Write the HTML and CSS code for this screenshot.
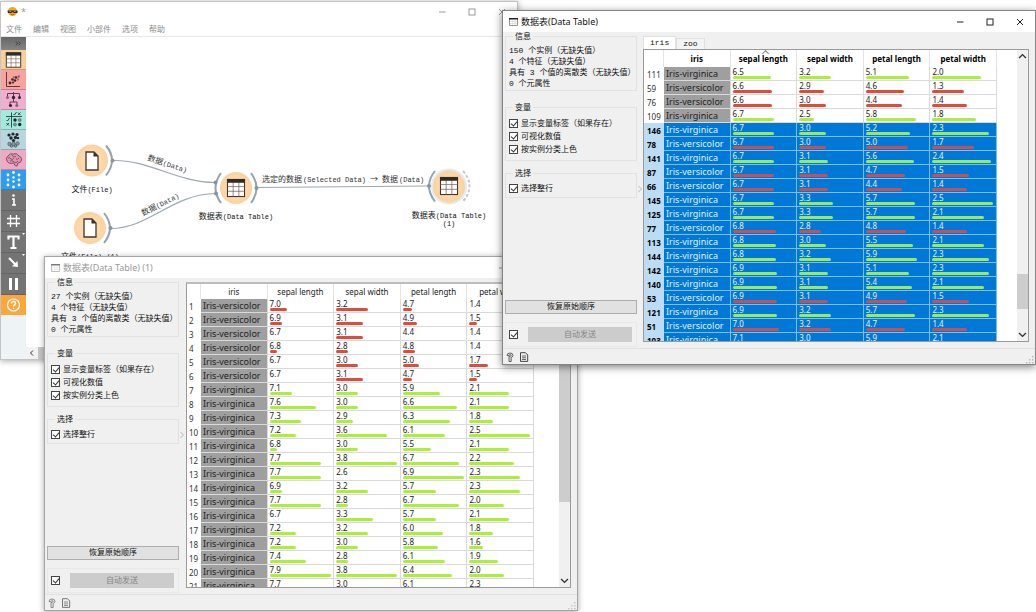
FILE: index.html
```html
<!DOCTYPE html>
<html lang="zh-CN">
<head>
<meta charset="utf-8">
<title>Data Table</title>
<link rel="stylesheet" href="styles.css">
</head>
<body>
<svg class="defs" width="0" height="0" aria-hidden="true">
  <symbol id="min" viewBox="0 0 8 8"><path d="M1 4h6.500" /></symbol>
  <symbol id="max" viewBox="0 0 8 8"><rect x="1" y="1" width="6" height="6"/></symbol>
  <symbol id="close" viewBox="0 0 8 8"><path d="M1 1l6 6M7 1l-6 6"/></symbol>
  <symbol id="sheet" viewBox="0 0 20 20">
    <rect x="1" y="1" width="18" height="18" fill="#fff" stroke="#40362f" stroke-width="1.200"/>
    <path d="M1 8.500h18M1 13.500h18M7 4v15M13 4v15" stroke="#77665c" stroke-width=".8"/>
    <rect x=".5" y=".5" width="19" height="4" fill="#332b26"/>
  </symbol>
  <symbol id="page" viewBox="0 0 14 20">
    <path d="M1 1h8l4 4v14H1z" fill="#fff" stroke="#40362f" stroke-width="1.300"/>
    <path d="M8.500 1v4.500H13z" fill="#332b26"/>
  </symbol>
  <symbol id="smallsheet" viewBox="0 0 9 9"><path d="M.5 1.500h8v7h-8z" fill="#fff" stroke="#777" stroke-width=".8"/><path d="M0 1h9v1.500H0z" fill="#222"/><path d="M1 4.500h7M1 6.500h7M3.500 3v5M6 3v5" stroke="#ccc" stroke-width=".5"/></symbol>
  <symbol id="help" viewBox="0 0 10 10"><path d="M2 3.500Q2 1 5 1t3 2.500Q8 5 6.200 5.500V9.500H4V4.500Q6 4.500 6 3.500T5 2.700 4 3.800z" fill="#ddd" stroke="#555" stroke-width=".9"/></symbol>
  <symbol id="report" viewBox="0 0 10 10"><path d="M1.500.7H6.500L8.700 3V9.400H1.500z" fill="#eee" stroke="#444"/><path d="M3 4h4M3 5.800h4M3 7.500h4" stroke="#444" stroke-width=".8"/></symbol>
  <symbol id="up" viewBox="0 0 8 6"><path d="M1.500 4.500L4 2l2.500 2.500"/></symbol>
  <symbol id="down" viewBox="0 0 8 6"><path d="M1.500 1.500L4 4l2.500-2.500"/></symbol>
</svg>

<section class="window main">
  <header class="titlebar">
    <svg class="logo" viewBox="0 0 12 12"><circle cx="6" cy="6" r="5" fill="#f7a51c"/><path d="M.5 5h11v2.500H7.500L6 6.500 4.500 7.500H1z" fill="#3c2c18"/><path d="M2.500 5.800h2M7.500 5.800h2" stroke="#d9c8a0" stroke-width=".8"/><path d="M4 9q2 1 4 0" stroke="#b3541e" fill="none"/></svg>
    <span class="title">*</span>
    <button class="winbtn" aria-label="最小化"><svg><use href="#min"/></svg></button>
    <button class="winbtn" aria-label="最大化"><svg><use href="#max"/></svg></button>
    <button class="winbtn" aria-label="关闭"><svg><use href="#close"/></svg></button>
  </header>
  <nav class="menu">
    <button>文件</button><button>编辑</button><button>视图</button><button>小部件</button><button>选项</button><button>帮助</button>
  </nav>
  <div class="workspace">
    <div class="toolbar">
      <button class="expand" aria-label="展开"><svg viewBox="0 0 25 14"><path d="M15 5l2 2-2 2M18 5l2 2-2 2" fill="none" stroke="#222" stroke-width=".7"/></svg></button>
      <button class="cat data" aria-label="数据"><svg viewBox="0 0 25 20"><use href="#sheet" x="4" y="2" width="17" height="16"/></svg></button>
      <button class="cat visual" aria-label="可视化"><svg viewBox="0 0 25 20"><path d="M5.500 2v14.500H19" fill="none" stroke="#5d3a3a"/><g fill="#3d2628"><circle cx="9" cy="13" r="1.400"/><circle cx="12" cy="12.500" r="1.100"/><circle cx="11.500" cy="9.500" r="1.300"/><circle cx="14" cy="10.500" r="1.300"/><circle cx="15" cy="7.500" r="1.300"/></g><g fill="#8d6464"><circle cx="17.800" cy="6.500" r="1.200"/><circle cx="12.800" cy="7.300" r="1"/><circle cx="17" cy="9.500" r="1"/></g></svg></button>
      <button class="cat model" aria-label="模型"><svg viewBox="0 0 25 20"><path d="M6.500 7V3.500h12V7M12.500 2v10M9 15v-3h7v3" fill="none" stroke="#5b3e4e"/><g fill="#382431"><circle cx="12.500" cy="7.500" r="1.700"/><circle cx="18.500" cy="7.500" r="1.500"/><circle cx="9.500" cy="15.500" r="1.600"/></g><g fill="#8b6178"><circle cx="6.500" cy="7.500" r="1.500"/><circle cx="15.800" cy="15.500" r="1.500"/></g></svg></button>
      <button class="cat evaluate" aria-label="评估"><svg viewBox="0 0 25 20"><path d="M5 6.500h16M10.500 2.500v15M12.500 4l1 1 2-3M17 2.500l2.500 2.500m0-2.500L17 5M5.500 10l1 1 2-3M5.500 13l2.500 2.500m0-2.500l-2.500 2.500" fill="none" stroke="#223e3b" stroke-width=".9"/><g fill="#152926"><circle cx="14" cy="10" r="1.700"/><circle cx="18.700" cy="14.500" r="1.700"/></g><g fill="#6f9994" stroke="#45625f" stroke-width=".6"><circle cx="18.700" cy="10" r="1.500"/><circle cx="14" cy="14.500" r="1.500"/></g></svg></button>
      <button class="cat cluster" aria-label="无监督"><svg viewBox="0 0 25 20"><g fill="#20282b"><circle cx="8" cy="5" r="1.600"/><circle cx="12" cy="4" r="1.600"/><circle cx="16" cy="4.500" r="1.600"/><circle cx="10" cy="8" r="1.700"/><circle cx="14.500" cy="7.500" r="1.700"/><circle cx="17" cy="8" r="1.200"/><circle cx="12.500" cy="10.500" r="1.600"/></g><g fill="#879da4" stroke="#46565c" stroke-width=".7"><circle cx="8.500" cy="14" r="1.700"/><circle cx="12.500" cy="14" r="1.800"/><circle cx="16.500" cy="13.500" r="1.700"/><circle cx="10.500" cy="16" r="1.300"/><circle cx="14.500" cy="16" r="1.300"/></g></svg></button>
      <button class="cat brain" aria-label="教育"><svg viewBox="0 0 25 20"><path d="M6 11Q4 8 7 6q2-3 5-2 4-1.500 6 2 3 1 2.500 4-.5 3-3.500 3l-1 3h-1.500L12.500 13Q8 14.500 6 11z" fill="#d996ae" stroke="#774458" stroke-width=".9"/><path d="M7 8q2-1 3 1t3-1M11 5q1 3 4 1.500M15 9q2 1 3-1M9 11q2-1 4 1t4-1" fill="none" stroke="#774458" stroke-width=".8"/></svg></button>
      <button class="cat active" aria-label="更多"><svg viewBox="0 0 25 20"><g fill="#fff"><circle cx="12.500" cy="2.500" r="1.400"/><circle cx="7" cy="5" r="1.400"/><circle cx="12.500" cy="7.500" r="1.200"/><circle cx="18" cy="5" r="1.400"/><circle cx="7" cy="10" r="1.400"/><circle cx="18" cy="10" r="1.400"/><circle cx="12.500" cy="11.500" r="1.200"/><circle cx="7" cy="15" r="1.400"/><circle cx="18" cy="15" r="1.400"/><circle cx="12.500" cy="17" r="1.400"/></g></svg></button>
      <button class="tool" aria-label="信息"><svg viewBox="0 0 25 20"><circle cx="12.500" cy="5.500" r="1.300" fill="#fff"/><path d="M11 9h2v6M11 15h4" fill="none" stroke="#fff" stroke-width="1.600"/></svg></button>
      <button class="tool" aria-label="网格"><svg viewBox="0 0 25 20"><path d="M9.500 4v12M15.500 4v12M6 7.500h13M6 12.500h13" stroke="#fff" stroke-width="1.300"/></svg></button>
      <button class="tool" aria-label="文字"><svg viewBox="0 0 25 20"><path d="M7.500 7.500V4.500h10v3M12.500 4v12M9.500 16h6" fill="none" stroke="#fff" stroke-width="2.200"/><path d="M21 1h3l-1.500 2z" fill="#fff"/></svg></button>
      <button class="tool" aria-label="箭头"><svg viewBox="0 0 25 20"><path d="M8 5l7 7" stroke="#fff" stroke-width="2"/><path d="M17 14l-6-.8L16.500 8z" fill="#fff"/><path d="M21 1h3l-1.500 2z" fill="#fff"/></svg></button>
      <button class="tool" aria-label="暂停"><svg viewBox="0 0 25 20"><path d="M9.500 4v12M15.500 4v12" stroke="#fff" stroke-width="3"/></svg></button>
      <button class="tool question" aria-label="帮助"><svg viewBox="0 0 25 20"><circle cx="12.500" cy="10" r="6" fill="none" stroke="#fff" stroke-width="1.200"/><path d="M10.500 8.500Q10.500 6.500 12.500 6.500t2 1.800-2 2.200v1.200M12.500 12.800v1.200" fill="none" stroke="#fff" stroke-width="1.300"/></svg></button>
    </div>
    <div class="canvas">
      <svg class="flow" viewBox="26 37 490 310" width="490" height="310">
        <defs><radialGradient id="peach"><stop offset="0" stop-color="#fee3bd"/><stop offset="1" stop-color="#fcd29f"/></radialGradient></defs>
        <g class="wire">
          <path d="M113 160.500C150 160 176 182 215 182.500"/>
          <path d="M111 228.500C150 228 172 194 216 193.500"/>
          <path d="M257 187.500L428 186"/>
        </g>
        <g class="arc">
          <path d="M106 145.500Q118 160 106 175.500"/>
          <path d="M104 213Q116 228 104 243"/>
          <path d="M221 173Q210 188 221 203"/><path d="M251 173Q262 188 251 203"/>
          <path d="M435 171Q423 186 435 201.500"/>
          <path class="dash" d="M463 171Q476 186 463 201.500"/>
        </g>
        <g fill="#8397a3"><circle cx="112.500" cy="160.500" r="2"/><circle cx="110.500" cy="228" r="2"/><circle cx="215.500" cy="182.500" r="2"/><circle cx="216" cy="193.500" r="2"/><circle cx="256.500" cy="188" r="2"/><circle cx="429" cy="186" r="2"/></g>
        <circle cx="449" cy="186.500" r="18" fill="#e4eaee"/>
        <g fill="url(#peach)"><circle cx="92" cy="160.500" r="16"/><circle cx="90" cy="228" r="16"/><circle cx="236" cy="188" r="16"/><circle cx="449" cy="186.500" r="16"/></g>
        <use href="#page" x="85" y="151" width="14" height="20"/>
        <use href="#page" x="83" y="218" width="14" height="20"/>
        <use href="#sheet" x="226.500" y="178.500" width="19" height="19"/>
        <use href="#sheet" x="439.500" y="176.500" width="19" height="19"/>
        <g class="name">
          <text x="92" y="192">文件<tspan class="mono">(File)</tspan></text>
          <text x="90" y="259">文件<tspan class="mono">(File) (1)</tspan></text>
          <text x="236" y="219">数据表<tspan class="mono">(Data Table)</tspan></text>
          <text x="449" y="218">数据表<tspan class="mono">(Data Table)</tspan></text>
          <text x="449" y="226"><tspan class="mono">(1)</tspan></text>
        </g>
        <g class="linkname">
          <text x="147" y="160" transform="rotate(18 147 160)">数据<tspan class="mono">(Data)</tspan></text>
          <text x="143" y="216" transform="rotate(-27 143 216)">数据<tspan class="mono">(Data)</tspan></text>
          <text x="262" y="182">选定的数据<tspan class="mono" x="303">(Selected</tspan><tspan class="mono" x="345">Data)</tspan><tspan x="370">→</tspan><tspan x="382">数据</tspan><tspan class="mono" x="399">(Data)</tspan></text>
        </g>
      </svg>
      <div class="hscroll"><svg viewBox="0 0 12 12"><path d="M7 3.500L4.500 6 7 8.500" fill="none" stroke="#333"/></svg><div class="hthumb"></div></div>
    </div>
  </div>
</section>

<section class="window back">
  <header class="titlebar">
    <svg class="appicon"><use href="#smallsheet"/></svg>
    <span class="title">数据表(Data Table) (1)</span>
    <button class="winbtn" aria-label="最小化"><svg><use href="#min"/></svg></button>
    <button class="winbtn" aria-label="最大化"><svg><use href="#max"/></svg></button>
    <button class="winbtn" aria-label="关闭"><svg><use href="#close"/></svg></button>
  </header>
  <div class="content">
    <div class="side">
      <fieldset class="info"><legend>信息</legend>
        <p>27 个实例（无缺失值）</p><p>4 个特征（无缺失值）</p><p>具有 3 个值的离散类（无缺失值）</p><p>0 个元属性</p>
      </fieldset>
      <fieldset class="vars"><legend>变量</legend>
        <label><input type="checkbox" checked>显示变量标签（如果存在）</label>
        <label><input type="checkbox" checked>可视化数值</label>
        <label><input type="checkbox" checked>按实例分类上色</label>
      </fieldset>
      <fieldset class="select"><legend>选择</legend>
        <label><input type="checkbox" checked>选择整行</label>
      </fieldset>
      <button class="restore">恢复原始顺序</button>
      <div class="auto"><input type="checkbox" checked aria-label="自动发送"><button disabled>自动发送</button></div>
    </div>
    <div class="splitter"><svg viewBox="0 0 6 10"><path d="M1.500 2L4.500 5 1.500 8"/></svg></div>
    <div class="view">
      <div class="frame">
        <div class="sheet"><table id="selected-table"></table></div>
        <div class="vscroll"><svg><use href="#up"/></svg><div class="track"><div class="thumb"></div></div><svg><use href="#down"/></svg></div>
      </div>
    </div>
  </div>
  <footer class="status"><svg><use href="#help"/></svg><svg><use href="#report"/></svg><svg class="grip" viewBox="0 0 9 9"><path d="M7 1h1.500v1.500H7zM7 4h1.500v1.500H7zM7 7h1.500v1.500H7zM4 4h1.500v1.500H4zM4 7h1.500v1.500H4zM1 7h1.500v1.500H1z" fill="#b8b8b8"/></svg></footer>
</section>

<section class="window front">
  <header class="titlebar">
    <svg class="appicon"><use href="#smallsheet"/></svg>
    <span class="title">数据表(Data Table)</span>
    <button class="winbtn" aria-label="最小化"><svg><use href="#min"/></svg></button>
    <button class="winbtn" aria-label="最大化"><svg><use href="#max"/></svg></button>
    <button class="winbtn" aria-label="关闭"><svg><use href="#close"/></svg></button>
  </header>
  <div class="content">
    <div class="side">
      <fieldset class="info"><legend>信息</legend>
        <p>150 个实例（无缺失值）</p><p>4 个特征（无缺失值）</p><p>具有 3 个值的离散类（无缺失值）</p><p>0 个元属性</p>
      </fieldset>
      <fieldset class="vars"><legend>变量</legend>
        <label><input type="checkbox" checked>显示变量标签（如果存在）</label>
        <label><input type="checkbox" checked>可视化数值</label>
        <label><input type="checkbox" checked>按实例分类上色</label>
      </fieldset>
      <fieldset class="select"><legend>选择</legend>
        <label><input type="checkbox" checked>选择整行</label>
      </fieldset>
      <button class="restore">恢复原始顺序</button>
      <div class="auto"><input type="checkbox" checked aria-label="自动发送"><button disabled>自动发送</button></div>
    </div>
    <div class="splitter"><svg viewBox="0 0 6 10"><path d="M1.500 2L4.500 5 1.500 8"/></svg></div>
    <div class="view">
      <div class="tabs"><button class="tab current">iris</button><button class="tab">zoo</button></div>
      <div class="frame">
        <div class="sheet"><table id="full-table"></table></div>
        <div class="vscroll"><svg><use href="#up"/></svg><div class="track"><div class="thumb"></div></div><svg><use href="#down"/></svg></div>
      </div>
    </div>
  </div>
  <footer class="status"><svg><use href="#help"/></svg><svg><use href="#report"/></svg><svg class="grip" viewBox="0 0 9 9"><path d="M7 1h1.500v1.500H7zM7 4h1.500v1.500H7zM7 7h1.500v1.500H7zM4 4h1.500v1.500H4zM4 7h1.500v1.500H4zM1 7h1.500v1.500H1z" fill="#b8b8b8"/></svg></footer>
</section>
<script src="tables.js"></script>
</body>
</html>
```
FILE: styles.css
```css
* { box-sizing: border-box; }
body {
  margin: 0;
  min-height: 100vh;
  position: relative;
  overflow: hidden;
  background: #fff;
  color: #111;
  font: 8px/11px "Liberation Mono", "Noto Sans CJK SC", monospace;
}
button { font: inherit; color: inherit; border: 0; padding: 0; background: none; }
svg { display: block; }
.defs { position: absolute; }

.window {
  position: absolute;
  display: flex;
  flex-direction: column;
  width: 534px;
  height: 355px;
  background: #f0f0f0;
  border: 1px solid #a5a5a5;
  box-shadow: 0 1px 6px rgba(0, 0, 0, .35);
}
.main { left: 0; top: 1px; width: 518px; height: 359px; background: #fff; border-color: #c4c4c4; }
.back { left: 44px; top: 256px; }
.front { left: 502px; right: 0; top: 10px; width: auto; border-color: #858585; box-shadow: 0 2px 8px rgba(0, 0, 0, .5); }

.titlebar {
  display: flex;
  align-items: center;
  flex: none;
  height: 21px;
  padding-left: 6px;
  background: #fff;
  font: 9px/12px "Noto Sans", "Noto Sans CJK SC", sans-serif;
}
.title { flex: 1; padding-left: 3px; }
.main .titlebar, .back .titlebar { color: #999; }
.main .titlebar { height: 19px; }
.logo { width: 11px; height: 11px; }
.appicon { width: 9px; height: 9px; }
.back .appicon { opacity: .6; }
.winbtn { width: 30px; height: 19px; display: flex; align-items: center; justify-content: center; color: #222; }
.main .winbtn, .back .winbtn { color: #999; }
.winbtn svg { width: 8px; height: 8px; fill: none; stroke: currentColor; stroke-width: 1; }

.menu {
  display: flex;
  gap: 11px;
  flex: none;
  height: 16px;
  padding-left: 5px;
  border-bottom: 1px solid #e8e8e8;
  color: #8c8c8c;
  font-family: "Noto Sans CJK SC", sans-serif;
}
.workspace { display: flex; flex: 1; min-height: 0; }
.toolbar { width: 25px; flex: none; background: #eef3f6; }
.toolbar button { display: block; width: 100%; height: 20px; border-bottom: 1px solid rgba(70, 60, 60, .3); }
.toolbar svg { width: 25px; height: 20px; }
.toolbar .expand { height: 13px; background: linear-gradient(#666, #858585); border: 0; }
.toolbar .expand svg { height: 13px; }
.toolbar .data { background: #f8cf99; }
.toolbar .visual { background: #f7a3a0; }
.toolbar .model { background: #f0afd0; }
.toolbar .evaluate { background: #a5e8dc; }
.toolbar .cluster { background: #b8d6df; }
.toolbar .brain { background: #efa9c4; }
.toolbar .active { background: #2e9df0; }
.toolbar .tool { background: #747474; height: 21px; }
.toolbar .question { background: #fca73c; border: 0; height: 20px; }
.canvas { flex: 1; min-width: 0; display: flex; flex-direction: column; }
.flow { flex: none; }
.wire { fill: none; stroke: #9ba8b0; stroke-width: 1.2; }
.arc { fill: none; stroke: #8fa3b1; stroke-width: 2; }
.dash { stroke: #c3cbd0; stroke-dasharray: 3 2; }
.name, .linkname { font: 8px "Noto Sans CJK SC", sans-serif; fill: #111; }
.name { text-anchor: middle; }
.linkname { fill: #333; }
.mono { font-family: "Liberation Mono", monospace; font-size: 7px; }
.hscroll { display: flex; flex: 1; background: #f2f2f2; }
.hscroll svg { width: 12px; height: 12px; }
.hthumb { flex: 1; background: #c6c6c6; }

.content { display: flex; flex: 1; min-height: 0; padding: 0 6px 0 2px; }
.side { display: flex; flex-direction: column; width: 132px; flex: none; padding-bottom: 1px; }
fieldset { margin: 0; padding: 5px 3px 1px; border: 1px solid #e2e2e2; min-width: 0; }
legend { padding: 0 2px; margin-left: 4px; line-height: 8px; font-family: "Noto Sans CJK SC", sans-serif; }
p { margin: 0; white-space: nowrap; }
.vars { margin-top: 12px; padding-top: 6px; padding-bottom: 4px; }
.select { margin-top: 8px; padding-bottom: 2px; }
label { display: flex; align-items: center; gap: 3px; height: 13px; white-space: nowrap; }
input[type="checkbox"] {
  appearance: none;
  flex: none;
  width: 9px;
  height: 9px;
  margin: 0;
  border: 1px solid #444;
  background: #fff;
  position: relative;
}
input[type="checkbox"]:checked::after {
  content: "";
  position: absolute;
  left: 2px;
  top: 0;
  width: 3px;
  height: 5px;
  border: solid #333;
  border-width: 0 1px 1px 0;
  transform: rotate(40deg);
}
.restore { margin-top: auto; height: 14px; line-height: 12px; background: #e1e1e1; border: 1px solid #adadad; }
.auto { display: flex; align-items: center; gap: 10px; height: 25px; margin-top: 8px; padding: 0 4px 0 3px; border: 1px solid #e8e8e8; }
.auto button { flex: 1; height: 15px; background: #ccc; color: #858585; }
.splitter { width: 6px; flex: none; padding-top: 152px; }
.back .splitter { width: 7px; }
.splitter svg { width: 6px; height: 10px; fill: none; stroke: #aaa; stroke-width: .8; }

.view { flex: 1; min-width: 0; display: flex; flex-direction: column; padding: 4px 0 6px; }
.tabs { display: flex; align-items: flex-end; height: 13px; flex: none; }
.tab { height: 11px; padding: 0 6px; background: #f4f4f4; border: 1px solid #e0e0e0; border-bottom: 0; line-height: 10px; }
.tab.current { height: 13px; padding: 0 6px; background: #fff; line-height: 12px; }
.frame { display: flex; flex: 1; min-height: 0; background: #fff; border: 1px solid #9a9a9a; }
.back .frame { border-top: 2px solid #bcbcbc; }
.sheet { flex: 1; min-width: 0; overflow: hidden; }

table { table-layout: fixed; border-spacing: 0; width: 353px; font: 8px/9px "Noto Sans", sans-serif; }
.back table { width: 347px; }
.index { width: 20px; }
.back .index { width: 14px; }
th, td { padding: 0; overflow: hidden; white-space: nowrap; }
thead th { height: 17px; font-weight: 700; color: #000; border-right: 1px solid #e4e4e4; position: relative; }
.back thead th { height: 15px; font-weight: 400; color: #222; }
.sorted::before {
  content: "";
  position: absolute;
  left: 50%;
  top: 1px;
  width: 4px;
  height: 4px;
  border: solid #888;
  border-width: 1px 0 0 1px;
  transform: rotate(45deg);
}
tbody th { height: 14px; padding-left: 3px; text-align: left; font-weight: 400; color: #333; }
.back tbody th { padding-left: 2px; }
td { height: 14px; padding-left: 2px; vertical-align: top; color: #222; border: solid #dadada; border-width: 0 1px 1px 0; }
.class { vertical-align: middle; background: #9f9f9f; font-size: 9px; }
.picked th { background: #bcdcf4; color: #000; font-weight: 700; }
.picked td { background: #0078d7; color: #e4f1fc; border-color: #7fbdec; }
.gauge { display: block; margin-right: 2px; }
.bar { display: block; height: 3px; border-radius: 2px; }
.green { background: #adee38; }
.red { background: #df4c3a; }
.picked .green { background: #98ec58; }
.picked .red { background: #c9504f; }

.vscroll { display: flex; flex-direction: column; width: 11px; flex: none; background: #f0f0f0; }
.vscroll svg { width: 11px; height: 12px; flex: none; fill: none; stroke: #333; }
.track { flex: 1; display: flex; flex-direction: column; }
.thumb { background: #cdcdcd; height: 35px; margin-top: 212px; }
.back .thumb { height: 206px; margin-top: 0; }

.status { display: flex; align-items: center; gap: 4px; flex: none; height: 16px; padding: 0 1px 0 2px; border-top: 1px solid #e0e0e0; }
.status svg { width: 10px; height: 10px; }
.status .grip { margin-left: auto; align-self: flex-end; width: 9px; height: 9px; }
.back .status svg { opacity: .7; }
```
FILE: tables.js
```js
const columns = ["sepal length", "sepal width", "petal length", "petal width"];

// Each row: label, class ("c" versicolor, "g" virginica), four measurements.
const selectedRows = `1 c 7.0 3.2 4.7 1.4
2 c 6.9 3.1 4.9 1.5
3 c 6.7 3.1 4.4 1.4
4 c 6.8 2.8 4.8 1.4
5 c 6.7 3.0 5.0 1.7
6 c 6.7 3.1 4.7 1.5
7 g 7.1 3.0 5.9 2.1
8 g 7.6 3.0 6.6 2.1
9 g 7.3 2.9 6.3 1.8
10 g 7.2 3.6 6.1 2.5
11 g 6.8 3.0 5.5 2.1
12 g 7.7 3.8 6.7 2.2
13 g 7.7 2.6 6.9 2.3
14 g 6.9 3.2 5.7 2.3
15 g 7.7 2.8 6.7 2.0
16 g 6.7 3.3 5.7 2.1
17 g 7.2 3.2 6.0 1.8
18 g 7.2 3.0 5.8 1.6
19 g 7.4 2.8 6.1 1.9
20 g 7.9 3.8 6.4 2.0
21 g 7.7 3.0 6.1 2.3`;

const fullRows = `111 g 6.5 3.2 5.1 2.0
59 c 6.6 2.9 4.6 1.3
76 c 6.6 3.0 4.4 1.4
109 g 6.7 2.5 5.8 1.8
146 g 6.7 3.0 5.2 2.3
78 c 6.7 3.0 5.0 1.7
141 g 6.7 3.1 5.6 2.4
87 c 6.7 3.1 4.7 1.5
66 c 6.7 3.1 4.4 1.4
145 g 6.7 3.3 5.7 2.5
125 g 6.7 3.3 5.7 2.1
77 c 6.8 2.8 4.8 1.4
113 g 6.8 3.0 5.5 2.1
144 g 6.8 3.2 5.9 2.3
142 g 6.9 3.1 5.1 2.3
140 g 6.9 3.1 5.4 2.1
53 c 6.9 3.1 4.9 1.5
121 g 6.9 3.2 5.7 2.3
51 c 7.0 3.2 4.7 1.4
103 g 7.1 3.0 5.9 2.1`;

function fill(id, text, ranges, pickedFrom, sortedColumn) {
  const head = columns
    .map((name, i) => `<th scope="col"${i === sortedColumn ? ' class="sorted"' : ""}>${name}</th>`)
    .join("");
  const body = text.split("\n").map((line, n) => {
    const [label, kind, ...values] = line.split(" ");
    const name = kind === "c" ? "Iris-versicolor" : "Iris-virginica";
    const color = kind === "c" ? "red" : "green";
    const cells = values.map((value, i) => {
      const [low, high] = ranges[i];
      const share = (value - low) / (high - low);
      const width = share > 0 ? 4 + share * 95 : 0;
      return `<td>${value}<span class="gauge"><span class="bar ${color}" style="width:${width.toFixed(1)}%"></span></span></td>`;
    }).join("");
    return `<tr${n >= pickedFrom ? ' class="picked"' : ""}><th scope="row">${label}</th><td class="class">${name}</td>${cells}</tr>`;
  }).join("");
  document.getElementById(id).innerHTML =
    `<thead><tr><th class="index"></th><th scope="col">iris</th>${head}</tr></thead><tbody>${body}</tbody>`;
}

fill("selected-table", selectedRows, [[6.7, 7.9], [2.6, 3.8], [4.4, 6.9], [1.4, 2.5]], Infinity, -1);
fill("full-table", fullRows, [[4.3, 7.9], [2.0, 4.4], [1.0, 6.9], [0.1, 2.5]], 4, 0);
```
